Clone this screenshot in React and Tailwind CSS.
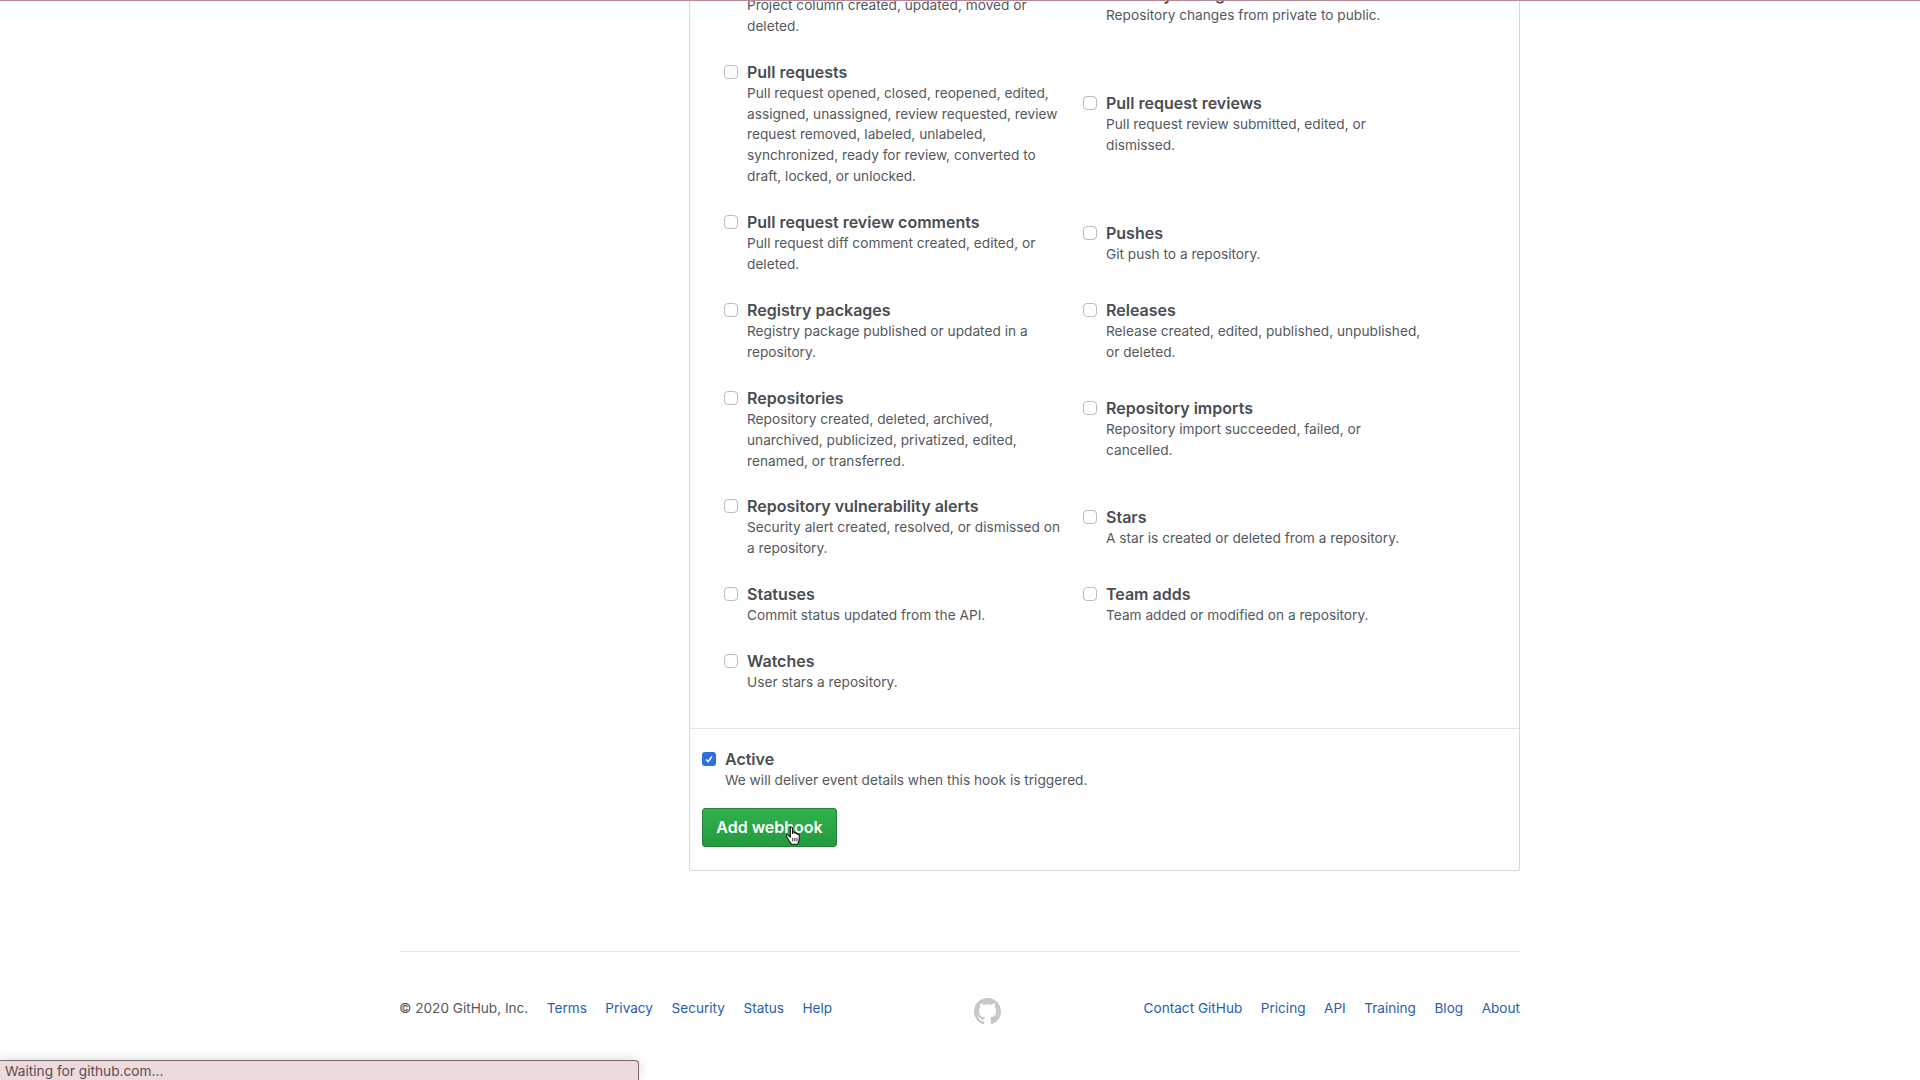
import React from "react";

const events = [
  { title: "Project columns", desc: "Project column created, updated, moved or deleted." },
  { title: "Visibility changes", desc: "Repository changes from private to public." },
  { title: "Pull requests", desc: "Pull request opened, closed, reopened, edited, assigned, unassigned, review requested, review request removed, labeled, unlabeled, synchronized, ready for review, converted to draft, locked, or unlocked." },
  { title: "Pull request reviews", desc: "Pull request review submitted, edited, or dismissed." },
  { title: "Pull request review comments", desc: "Pull request diff comment created, edited, or deleted." },
  { title: "Pushes", desc: "Git push to a repository." },
  { title: "Registry packages", desc: "Registry package published or updated in a repository." },
  { title: "Releases", desc: "Release created, edited, published, unpublished, or deleted." },
  { title: "Repositories", desc: "Repository created, deleted, archived, unarchived, publicized, privatized, edited, renamed, or transferred." },
  { title: "Repository imports", desc: "Repository import succeeded, failed, or cancelled." },
  { title: "Repository vulnerability alerts", desc: "Security alert created, resolved, or dismissed on a repository." },
  { title: "Stars", desc: "A star is created or deleted from a repository." },
  { title: "Statuses", desc: "Commit status updated from the API." },
  { title: "Team adds", desc: "Team added or modified on a repository." },
  { title: "Watches", desc: "User stars a repository." },
];

const footerLeft = ["Terms", "Privacy", "Security", "Status", "Help"];
const footerRight = ["Contact GitHub", "Pricing", "API", "Training", "Blog", "About"];

const EventItem = ({ title, desc }) => (
  <div className="flex items-start pr-[14px]">
    <span className="w-[14px] h-[14px] mt-[3px] mr-[9px] shrink-0 rounded-[4px] border border-[#bdbdbd] bg-white" />
    <div>
      <div className="text-[16px] leading-[21px] font-semibold text-[#4a4d51]">{title}</div>
      <p className="text-[13.7px] leading-[20.9px] text-[#55585c]">{desc}</p>
    </div>
  </div>
);

const GithubMark = () => (
  <svg viewBox="0 0 16 16" className="w-[27px] h-[27px]" fill="#c6c8ca">
    <path d="M8 0C3.58 0 0 3.58 0 8c0 3.54 2.29 6.53 5.47 7.59.4.07.55-.17.55-.38 0-.19-.01-.82-.01-1.49-2.01.37-2.53-.49-2.69-.94-.09-.23-.48-.94-.82-1.13-.28-.15-.68-.52-.01-.53.63-.01 1.08.58 1.23.82.72 1.21 1.87.87 2.33.66.07-.52.28-.87.51-1.07-1.78-.2-3.64-.89-3.64-3.95 0-.87.31-1.59.82-2.15-.08-.2-.36-1.02.08-2.12 0 0 .67-.21 2.2.82.64-.18 1.32-.27 2-.27s1.36.09 2 .27c1.53-1.04 2.2-.82 2.2-.82.44 1.1.16 1.92.08 2.12.51.56.82 1.27.82 2.15 0 3.07-1.87 3.75-3.65 3.95.29.25.54.73.54 1.48 0 1.07-.01 1.93-.01 2.2 0 .21.15.46.55.38A8.01 8.01 0 0016 8c0-4.42-3.58-8-8-8z" />
  </svg>
);

const HandCursor = () => (
  <svg viewBox="0 0 18 22" className="absolute left-[82px] top-[17px] w-[17px] h-[20px]">
    <path
      d="M5.5 2.2c0-1.5 2.4-1.5 2.4 0v6l.3-.9c.4-1.2 2.3-1 2.3.3l.2.6c.4-1 2.2-.8 2.3.4l.1.7c.5-.8 2.2-.5 2.2.8v4.5c0 2.6-1.3 4-1.7 5.4H6.6c-.5-1.3-1.6-2.4-3-4.6L1.4 11.600c-.8-1.300.8-2.600 2-1.400l2.100 2.100z"
      fill="#fff"
      stroke="#111"
      strokeWidth="1.200"
      strokeLinejoin="round"
    />
    <path d="M8.200 13v4M10.500 13v4M12.800 13v4" stroke="#111" strokeWidth="1" />
  </svg>
);

const App = () => {
  return (
    <div className="relative h-[1080px] overflow-hidden bg-white flex flex-col justify-end font-['Inter',sans-serif]">
      <div className="absolute top-0 left-0 right-0 h-px bg-[#b58a96]" />

      <main className="w-[831px] ml-[689px] shrink-0 border border-t-0 border-[#d8d8d8] rounded-b-[3px]">
        <div className="pl-[34px] pb-[35px] border-b border-[#e3e3e3] grid grid-cols-[359px_359px] items-center gap-y-[25px]">
          {events.map((item) => (
            <EventItem key={item.title} {...item} />
          ))}
        </div>
        <div className="px-[12px] pt-[20px] pb-[23px]">
          <div className="flex items-start">
            <span className="w-[14px] h-[14px] mt-[3px] mr-[9px] rounded-[3px] bg-[#2f6fe0] flex items-center justify-center">
              <svg viewBox="0 0 12 12" className="w-[10px] h-[10px]" fill="none" stroke="#fff" strokeWidth="1.800">
                <path d="M2.500 6.500l2.500 2.500 4.500-6" />
              </svg>
            </span>
            <div>
              <div className="text-[16px] leading-[21px] font-semibold text-[#4a4d51]">Active</div>
              <p className="text-[13.7px] leading-[20.9px] text-[#55585c]">We will deliver event details when this hook is triggered.</p>
            </div>
          </div>
          <button className="relative mt-[17px] w-[135px] h-[39px] pb-[1px] rounded-[3px] border border-[#23803a] bg-gradient-to-b from-[#2fb24c] to-[#249a3d] text-[16px] leading-[36px] font-semibold text-white">
            Add webhook
            <HandCursor />
          </button>
        </div>
      </main>

      <footer className="w-[1121px] ml-[399px] mt-[80px] shrink-0 h-[129px] border-t border-[#e8e8e8] pt-[46px] flex items-start text-[13.6px] leading-[21px]">
        <div className="flex gap-[18.500px]">
          <span className="text-[#55585c]">© 2020 GitHub, Inc.</span>
          {footerLeft.map((link) => (
            <a key={link} className="text-[#2a5db0]">{link}</a>
          ))}
        </div>
        <div className="ml-[142px]"><GithubMark /></div>
        <div className="flex gap-[18.500px] ml-auto">
          {footerRight.map((link) => (
            <a key={link} className="text-[#2a5db0]">{link}</a>
          ))}
        </div>
      </footer>

      <div className="absolute left-0 bottom-0 w-[639px] h-[20px] bg-[#eddadd] border-t border-r border-[#77686c] rounded-tr-[4px] shadow-[0_0_12px_rgba(0,0,0,0.15)] pl-[5px] text-[13.7px] leading-[21px] text-[#5c4c50]">
        Waiting for github.com...
      </div>
    </div>
  );
};

export default App;
